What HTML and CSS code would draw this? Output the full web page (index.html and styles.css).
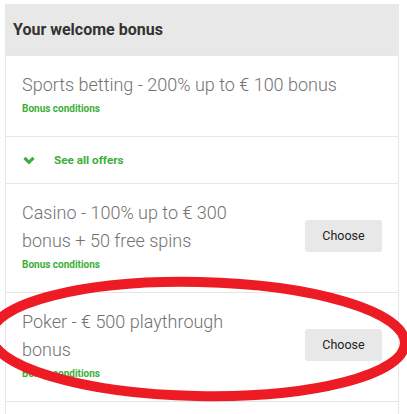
FILE: index.html
```html
<!DOCTYPE html>
<html>
<head>
<meta charset="utf-8">
<link rel="stylesheet" href="styles.css">
</head>
<body>
<div class="card">
  <div class="header">Your welcome bonus</div>
  <div class="row">
    <div class="info">
      <div class="title">Sports betting - 200% up to € 100 bonus</div>
      <div class="cond">Bonus conditions</div>
    </div>
  </div>
  <div class="row more">
    <svg class="chev" width="12" height="9" viewBox="0 0 12 9"><polyline points="1.5,1.8 6,6.3 10.5,1.8" fill="none" stroke="#3cae3a" stroke-width="3.2"/></svg>
    <span>See all offers</span>
  </div>
  <div class="row">
    <div class="info">
      <div class="title narrow">Casino - 100% up to € 300 bonus + 50 free spins</div>
      <div class="cond">Bonus conditions</div>
    </div>
    <button class="btn">Choose</button>
  </div>
  <div class="row">
    <div class="info">
      <div class="title narrow">Poker - € 500 playthrough bonus</div>
      <div class="cond">Bonus conditions</div>
    </div>
    <button class="btn">Choose</button>
  </div>
  <div class="row last"></div>
</div>
<svg class="mark" width="407" height="414" viewBox="0 0 407 414">
  <ellipse cx="198" cy="339" rx="207" ry="57" transform="rotate(1.2 198 339)" fill="none" stroke="#ed1c24" stroke-width="10"/>
</svg>
</body>
</html>
```

FILE: styles.css
```css
html, body {
  margin: 0;
  padding: 0;
  background: #fff;
}
body {
  padding: 4px 8px 0 5px;
  font-family: Roboto, "Liberation Sans", sans-serif;
  height: 410px;
  overflow: hidden;
}
.card {
  width: 392px;
  border-left: 1px solid #e6e6e6;
  border-right: 1px solid #e6e6e6;
}
.header {
  background: #e8e8e8;
  height: 51px;
  margin: 0 -1px;
  padding: 0 8px;
  display: flex;
  align-items: center;
  font-weight: 700;
  font-size: 16px;
  color: #333;
}
.row {
  border-top: 1px solid #e6e6e6;
  padding: 15px 16px 20px 16px;
  display: flex;
  align-items: center;
  justify-content: space-between;
}
.info {
  display: flex;
  flex-direction: column;
}
.title {
  font-size: 18px;
  font-weight: 300;
  line-height: 28px;
  color: #727272;
}
.narrow {
  width: 250px;
}
.cond {
  margin-top: 3px;
  font-size: 10px;
  line-height: 14px;
  font-weight: 700;
  color: #3cae3a;
}
.more {
  padding: 15px 16px 15px 17px;
  justify-content: flex-start;
  gap: 19px;
  height: 16px;
}
.more span {
  font-size: 11.7px;
  font-weight: 700;
  color: #3cae3a;
}
.chev {
  display: block;
}
.btn {
  width: 77px;
  height: 32px;
  border: none;
  border-radius: 3px;
  background: #e8e8e8;
  font-family: Roboto, "Liberation Sans", sans-serif;
  font-size: 12.5px;
  font-weight: 400;
  color: #222;
  padding: 0;
}
.last {
  height: 12px;
  padding: 0;
}
.mark {
  position: absolute;
  left: 0;
  top: 0;
  pointer-events: none;
}
```
